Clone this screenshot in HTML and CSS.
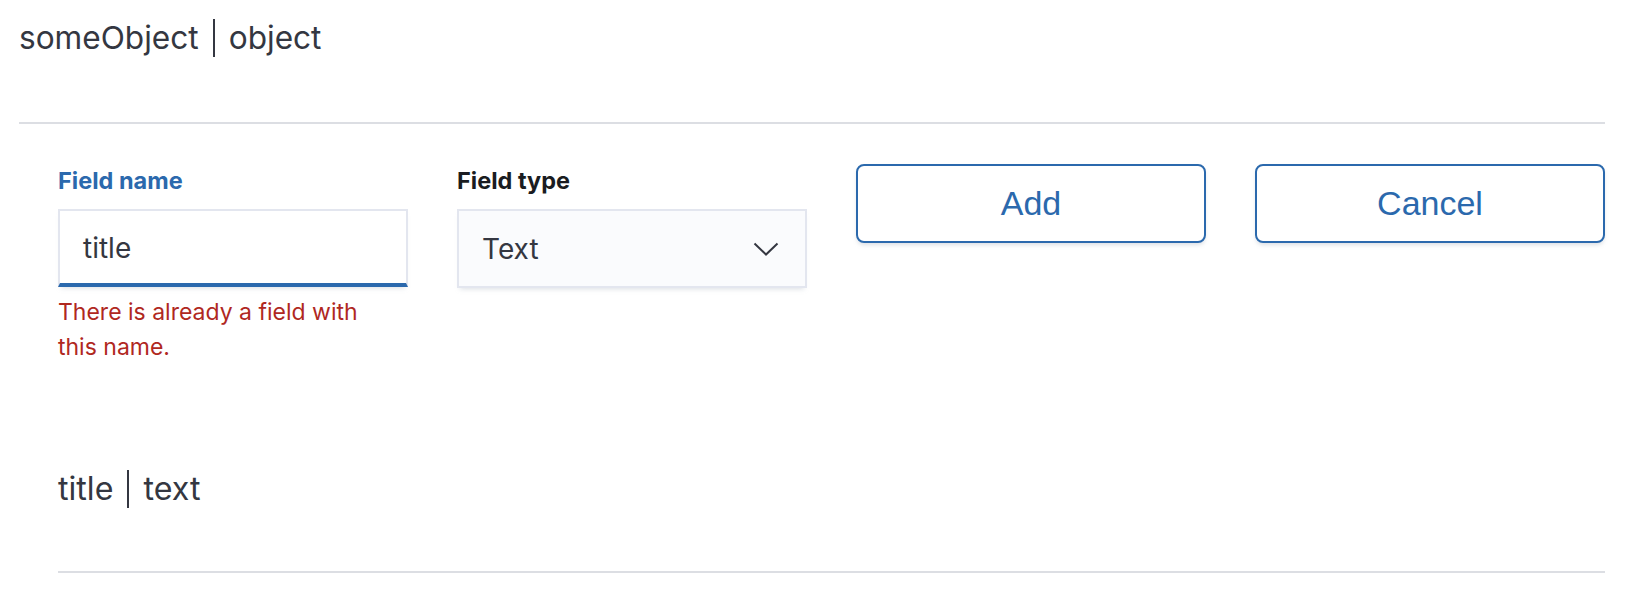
FILE: index.html
```html
<!DOCTYPE html>
<html lang="en">
<head>
<meta charset="utf-8">
<title>Mappings editor</title>
<link rel="stylesheet" href="styles.css">
</head>
<body>
<div class="page">
  <div class="name-type">
    <span class="nt-name">someObject</span><span class="nt-sep"></span><span class="nt-type">object</span>
  </div>
  <div class="rule rule-top"></div>
  <div class="nested">
    <div class="form-grid">
      <div class="field">
        <label class="label label-active">Field name</label>
        <div class="input input-focused">title</div>
        <div class="error">There is already a field with this name.</div>
      </div>
      <div class="field">
        <label class="label">Field type</label>
        <div class="select">
          <span>Text</span>
          <svg class="chevron" width="26" height="14" viewBox="0 0 26 14"><path d="M1.5 1.5 L13 12.5 L24.5 1.5" fill="none" stroke="#343741" stroke-width="2"/></svg>
        </div>
      </div>
      <button class="btn">Add</button>
      <button class="btn">Cancel</button>
    </div>
    <div class="name-type child-row">
      <span class="nt-name">title</span><span class="nt-sep"></span><span class="nt-type">text</span>
    </div>
    <div class="rule rule-bottom"></div>
  </div>
</div>
</body>
</html>
```
FILE: styles.css
```css
html, body {
  margin: 0;
  padding: 0;
  background: #ffffff;
}

body {
  font-family: Inter, "Noto Sans", sans-serif;
  color: #343741;
}

.page {
  padding: 0 31px 0 19px;
}

.name-type {
  display: flex;
  align-items: center;
  height: 38px;
  margin-top: 19px;
  font-size: 31.6px;
  line-height: 38px;
  color: #343741;
}

.nt-sep {
  display: block;
  width: 2px;
  height: 38px;
  background: #343741;
  margin: 0 14px;
}

.rule {
  height: 2px;
  background: #dcdee3;
}

.rule-top {
  margin-top: 65px;
}

.nested {
  margin-left: 39px;
}

.form-grid {
  display: grid;
  grid-template-columns: repeat(4, 350px);
  column-gap: 49px;
  align-items: start;
  margin-top: 40px;
}

.field {
  display: flex;
  flex-direction: column;
}

.label {
  font-size: 23.5px;
  font-weight: 700;
  line-height: 34px;
  margin-bottom: 11px;
  color: #1a1c21;
}

.label-active {
  color: #2b69ad;
}

.input, .select {
  box-sizing: border-box;
  height: 78px;
  border: 2px solid #e3e6ef;
  font-size: 28px;
  color: #343741;
  display: flex;
  align-items: center;
  padding-left: 23px;
  box-shadow: 0 4px 5px -3px rgba(152, 162, 179, 0.35);
}

.input-focused {
  background: #ffffff;
  border-bottom: 4px solid #2b69ad;
  padding-top: 2px;
}

.select {
  background: #fafbfd;
  justify-content: space-between;
  padding-right: 26px;
  height: 79px;
}

.chevron {
  display: block;
}

.error {
  margin-top: 8px;
  max-width: 320px;
  font-size: 23px;
  line-height: 35px;
  color: #b0281f;
}

.btn {
  box-sizing: border-box;
  height: 79px;
  border: 2px solid #2b69ad;
  border-radius: 8px;
  background: #ffffff;
  color: #2b69ad;
  font-family: "Liberation Sans", Arial, sans-serif;
  font-size: 34px;
  box-shadow: 0 3px 4px -1px rgba(152, 162, 179, 0.35);
  padding: 0;
}

.child-row {
  margin-top: 105px;
  font-size: 32.2px;
}

.rule-bottom {
  margin-top: 63px;
}
```
